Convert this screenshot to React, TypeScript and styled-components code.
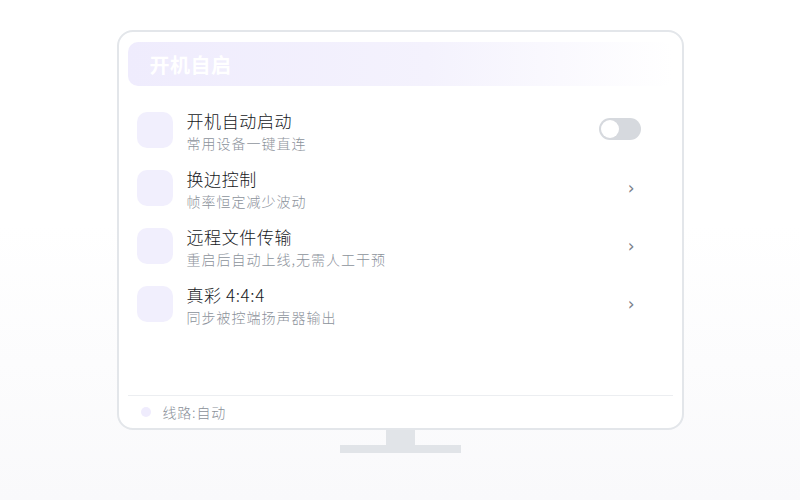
import React from 'react';
import styled, { createGlobalStyle } from 'styled-components';

const GlobalStyle = createGlobalStyle`
  html, body {
    margin: 0;
    padding: 0;
  }
  body {
    width: 800px;
    height: 500px;
    background: linear-gradient(180deg, #ffffff 0%, #ffffff 45%, #f9f9fb 100%);
    font-family: "Noto Sans CJK SC", "Noto Sans", sans-serif;
  }
`;

const Stage = styled.div`
  display: flex;
  flex-direction: column;
  align-items: center;
  padding-top: 30px;
`;

const Monitor = styled.div`
  width: 567px;
  height: 400px;
  box-sizing: border-box;
  border: 2px solid #e3e6ea;
  border-radius: 16px;
  background: #ffffff;
  padding: 10px 9px 0 9px;
  display: flex;
  flex-direction: column;
`;

const Header = styled.div`
  height: 44px;
  border-radius: 10px;
  background: linear-gradient(90deg, #efecfd 0%, #f4f2fd 55%, #ffffff 100%);
  display: flex;
  align-items: center;
  padding-left: 22px;
`;

const HeaderTitle = styled.span`
  color: #ffffff;
  font-size: 20px;
  font-weight: 700;
  letter-spacing: 0.5px;
`;

const List = styled.div`
  flex: 1;
  display: flex;
  flex-direction: column;
  padding: 15px 32px 0 9px;
`;

const Row = styled.div`
  height: 58px;
  display: flex;
  align-items: center;
`;

const IconBox = styled.div`
  width: 36px;
  height: 36px;
  border-radius: 10px;
  background: #f1effd;
  flex-shrink: 0;
`;

const Texts = styled.div`
  flex: 1;
  display: flex;
  flex-direction: column;
  margin-left: 14px;
  margin-top: 4px;
`;

const Title = styled.div`
  font-size: 17px;
  line-height: 22px;
  letter-spacing: 0.6px;
  font-weight: 300;
  color: #16181c;
`;

const Sub = styled.div`
  font-size: 14px;
  line-height: 22px;
  letter-spacing: 1px;
  font-weight: 300;
  color: #8c929b;
`;

const Toggle = styled.div<{ on?: boolean }>`
  width: 42px;
  height: 22px;
  border-radius: 11px;
  background: ${(p) => (p.on ? '#7c6cf2' : '#d6d9de')};
  position: relative;
  margin-top: -2px;
  &::after {
    content: '';
    position: absolute;
    top: 2px;
    left: ${(p) => (p.on ? '22px' : '2px')};
    width: 18px;
    height: 18px;
    border-radius: 50%;
    background: #ffffff;
  }
`;

const Chevron = styled.span`
  font-size: 17px;
  color: #7b818a;
  margin-right: 6px;
  font-family: "DejaVu Sans", sans-serif;
  line-height: 1;
`;

const Footer = styled.div`
  height: 32px;
  border-top: 1px solid #eceef1;
  display: flex;
  align-items: center;
  padding-left: 13px;
`;

const Dot = styled.span`
  width: 10px;
  height: 10px;
  border-radius: 50%;
  background: #efecfd;
`;

const FooterText = styled.span`
  margin-left: 12px;
  font-size: 14px;
  letter-spacing: 0.8px;
  font-weight: 300;
  color: #8a9099;
`;

const Neck = styled.div`
  width: 29px;
  height: 15px;
  background: #e1e4e8;
`;

const Base = styled.div`
  width: 121px;
  height: 8px;
  background: #e1e4e8;
`;

type Item = { title: string; sub: string; toggle?: boolean };

const items: Item[] = [
  { title: '开机自动启动', sub: '常用设备一键直连', toggle: true },
  { title: '换边控制', sub: '帧率恒定减少波动' },
  { title: '远程文件传输', sub: '重启后自动上线,无需人工干预' },
  { title: '真彩 4:4:4', sub: '同步被控端扬声器输出' },
];

export default function App() {
  return (
    <>
      <GlobalStyle />
      <Stage>
        <Monitor>
          <Header>
            <HeaderTitle>开机自启</HeaderTitle>
          </Header>
          <List>
            {items.map((it) => (
              <Row key={it.title}>
                <IconBox />
                <Texts>
                  <Title>{it.title}</Title>
                  <Sub>{it.sub}</Sub>
                </Texts>
                {it.toggle ? <Toggle /> : <Chevron>›</Chevron>}
              </Row>
            ))}
          </List>
          <Footer>
            <Dot />
            <FooterText>线路:自动</FooterText>
          </Footer>
        </Monitor>
        <Neck />
        <Base />
      </Stage>
    </>
  );
}
